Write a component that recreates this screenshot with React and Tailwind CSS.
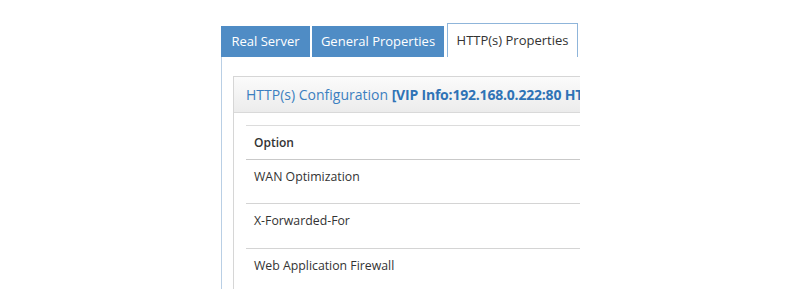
// Virtual service editor: tab strip + HTTP(s) configuration table
const rows = [
  { label: "WAN Optimization", h: "h-[44px]" },
  { label: "X-Forwarded-For", h: "h-[45px]" },
  { label: "Web Application Firewall", h: "h-[45px]" },
];

export default function App() {
  return (
    <div className="w-[800px] h-[289px] bg-white overflow-hidden font-['Open_Sans',sans-serif]">
      <div className="ml-[221px] pt-[23px] w-[359px] overflow-hidden">
        <div className="flex items-end h-[34px]">
          <div className="w-[89px] h-[31px] bg-[#4f8cc5] text-white text-[13px] flex items-center justify-center">Real Server</div>
          <div className="ml-[2px] w-[132px] h-[31px] bg-[#4f8cc5] text-white text-[13px] flex items-center justify-center">General Properties</div>
          <div className="ml-[3px] w-[131px] h-[34px] bg-white border border-b-0 border-[#8fb5da] text-[#333] text-[13px] flex items-center justify-center pt-[1px]">HTTP(s) Properties</div>
        </div>
        <div className="border-l border-[#b9cfe5] pl-[11px] pt-[19px] h-[240px]">
          <div className="w-[600px] border border-[#d6d6d6]">
            <div className="h-[36px] bg-gradient-to-b from-[#fbfbfb] to-[#ececec] border-b border-[#d9d9d9] flex items-center pl-[12px] text-[14px] text-[#3c7fc0] whitespace-nowrap">
              HTTP(s) Configuration&nbsp;<span className="font-bold tracking-[-0.2px] text-[#2f73b6]">[VIP Info:192.168.0.222:80 HTTP]</span>
            </div>
            <div className="mx-[12px] mt-[12px] border-t border-[#dcdcdc]">
              <div className="h-[34px] border-b border-[#c9c9c9] flex items-center pl-[8px] text-[12px] font-semibold text-[#333]">Option</div>
              {rows.map((r, i) => (
                <div key={r.label} className={r.h + " pl-[8px] pt-[8px] text-[12.3px] text-[#333] " + (i < rows.length - 1 ? "border-b border-[#d4d4d4]" : "")}>
                  {r.label}
                </div>
              ))}
            </div>
          </div>
        </div>
      </div>
    </div>
  );
}
